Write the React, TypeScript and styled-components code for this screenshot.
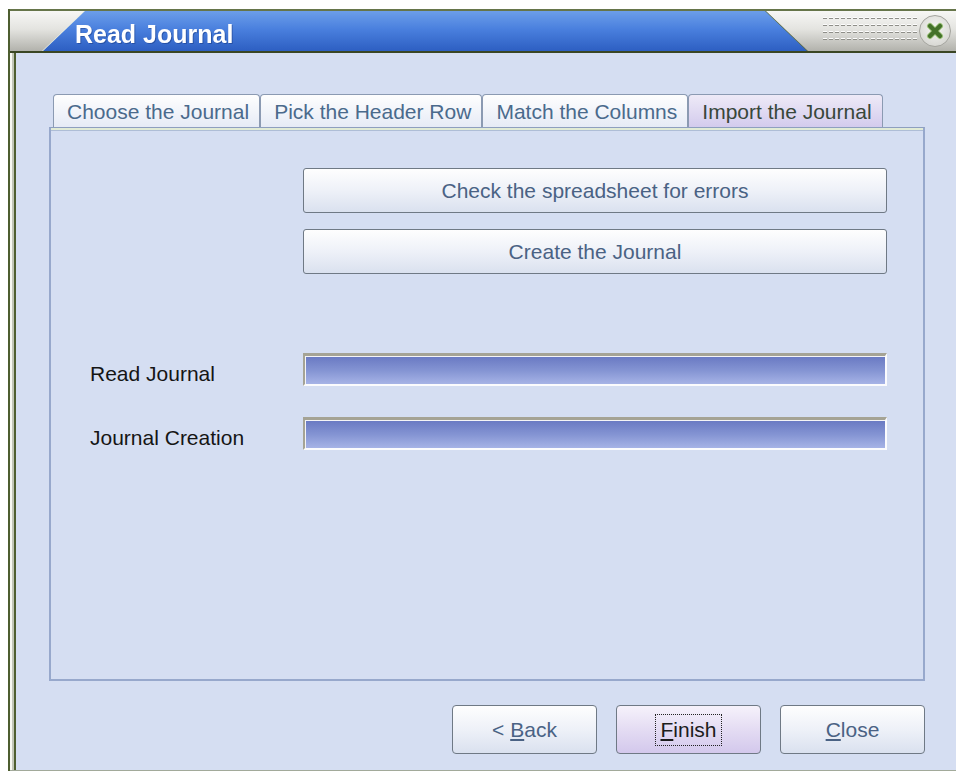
import React from 'react'
import styled, { createGlobalStyle } from 'styled-components'

const GlobalStyle = createGlobalStyle`
    html,
    body {
        margin: 0;
        background: #fff;
        overflow: hidden;
    }

    body {
        font-family: 'Liberation Sans', Arial, sans-serif;
    }
`

type TabProps = { $active?: boolean }
type PushButtonProps = { $default?: boolean }

const TABS = ['Choose the Journal', 'Pick the Header Row', 'Match the Columns', 'Import the Journal']

const CloseGlyph = () => (
    <svg width="20" height="20" viewBox="0 0 20 20">
        <path d="M5 5 L15 15 M15 5 L5 15" stroke="#9cc27a" strokeWidth="6" strokeLinecap="round" />
        <path d="M5 5 L15 15 M15 5 L5 15" stroke="#44722a" strokeWidth="4.2" strokeLinecap="round" />
    </svg>
)

export default function App() {
    return (
        <>
            <GlobalStyle />
            <Window>
                <TitleBar>
                    <BandEdge>
                        <TitleBand>
                            <Caption>Read Journal</Caption>
                        </TitleBand>
                    </BandEdge>
                    <Spacer />
                    <Grip />
                    <CloseBox>
                        <CloseGlyph />
                    </CloseBox>
                </TitleBar>

                <Body>
                    <TabStrip>
                        {TABS.map((t, i) => (
                            <Tab key={t} $active={i === TABS.length - 1}>
                                {t}
                            </Tab>
                        ))}
                    </TabStrip>

                    <Panel>
                        <Actions>
                            <ActionButton>Check the spreadsheet for errors</ActionButton>
                            <ActionButton>Create the Journal</ActionButton>
                        </Actions>

                        <ProgressGrid>
                            <Label>Read Journal</Label>
                            <Progress>
                                <Fill />
                            </Progress>
                            <Label>Journal Creation</Label>
                            <Progress>
                                <Fill />
                            </Progress>
                        </ProgressGrid>
                    </Panel>

                    <Footer>
                        <PushButton>
                            <span>
                                &lt; <u>B</u>ack
                            </span>
                        </PushButton>
                        <PushButton $default>
                            <Focus>
                                <u>F</u>inish
                            </Focus>
                        </PushButton>
                        <PushButton>
                            <span>
                                <u>C</u>lose
                            </span>
                        </PushButton>
                    </Footer>
                </Body>
            </Window>
        </>
    )
}

const Window = styled.div`
    margin: 9px 0 0 8px;
    width: 948px;
    box-sizing: border-box;
    border-left: 2px solid #4e5e30;
    display: flex;
    flex-direction: column;
`

const TitleBar = styled.div`
    height: 44px;
    box-sizing: border-box;
    display: flex;
    align-items: stretch;
    padding-left: 33px;
    border-top: 2px solid #66754a;
    border-bottom: 2px solid #3a4624;
    background: linear-gradient(#f7f7f5, #e4e4e0 45%, #b2b2ac);
`

/* light bevel on the left slant, dark one on the right slant */
const BandEdge = styled.div`
    display: flex;
    filter: drop-shadow(-1px 0 0 #eef2e4) drop-shadow(1px 0 0 #5a6a3c);
`

const TitleBand = styled.div`
    width: 764px;
    display: flex;
    align-items: center;
    padding: 6px 0 0 32px;
    box-sizing: border-box;
    clip-path: polygon(42px 0, 722px 0, 100% 100%, 0 100%);
    background: linear-gradient(#6c9eea, #4a80de 45%, #2d5fc2);
`

const Caption = styled.span`
    font-weight: bold;
    font-size: 25px;
    color: #fff;
    text-shadow: 1px 1px 0 rgba(20, 50, 120, 0.45);
`

const Spacer = styled.div`
    flex: 1;
`

const Grip = styled.div`
    width: 96px;
    height: 28px;
    align-self: center;
    background: repeating-linear-gradient(to bottom, #fdfdfd 0 1px, #8e8e88 1px 2px, transparent 2px 7px);
    -webkit-mask-image: repeating-linear-gradient(90deg, #000 0 4px, transparent 4px 6px);
    mask-image: repeating-linear-gradient(90deg, #000 0 4px, transparent 4px 6px);
`

const CloseBox = styled.div`
    width: 32px;
    height: 32px;
    box-sizing: border-box;
    align-self: center;
    margin: 0 5px 0 0;
    border-radius: 50%;
    border: 1px solid #a4a49e;
    background: radial-gradient(circle at 50% 40%, #f6f6f4, #cfcfca);
    display: flex;
    align-items: center;
    justify-content: center;
`

const Body = styled.div`
    height: 718px;
    box-sizing: border-box;
    padding: 41px 31px 0 39px;
    background: #d5def2;
    border-bottom: 1px solid #a2aa9a;
    box-shadow: inset 2px 0 0 #f7f8f2, inset 4px 0 0 #c2c6b8, inset 6px 0 0 #4e5e30;
    font-size: 21px;
`

const TabStrip = styled.div`
    display: flex;
    margin-left: 4px;
    height: 33px;
`

const Tab = styled.div<TabProps>`
    display: flex;
    align-items: center;
    padding: 1px 10px 0 13px;
    box-sizing: border-box;
    border: 1px solid #8b9ab2;
    border-bottom: none;
    border-radius: 4px 4px 0 0;
    white-space: nowrap;
    color: ${(p) => (p.$active ? '#38473a' : '#4a6a8c')};
    background: ${(p) =>
        p.$active ? 'linear-gradient(#eeeaf7, #d3cbed)' : 'linear-gradient(#fefefe, #e6ebf6)'};
`

const Panel = styled.div`
    height: 554px;
    box-sizing: border-box;
    padding: 40px 36px 0 39px;
    border: 2px solid #97a8cc;
    border-top: 1px solid #8e9fbf;
    box-shadow: inset 0 2px 0 #e1ebd6, inset 0 3px 0 #aebdd6;
`

const Actions = styled.div`
    display: flex;
    flex-direction: column;
    gap: 16px;
    margin-left: 213px;
`

const ActionButton = styled.div`
    height: 45px;
    box-sizing: border-box;
    display: flex;
    align-items: center;
    justify-content: center;
    border: 1px solid #6f7985;
    border-radius: 3px;
    background: linear-gradient(#fefefe, #eef1f8 50%, #dae1ef);
    color: #4a6284;
`

const ProgressGrid = styled.div`
    display: grid;
    grid-template-columns: 213px 1fr;
    grid-auto-rows: 33px;
    row-gap: 31px;
    align-items: center;
    margin-top: 79px;
`

const Label = styled.span`
    color: #151515;
    padding-top: 9px;
`

const Progress = styled.div`
    height: 33px;
    box-sizing: border-box;
    border: 2px solid;
    border-top-width: 3px;
    border-color: #a5a395 #fbfbfd #fbfbfd #a5a395;
    padding: 1px 0 0 1px;
    background: #f4f4f6;
`

const Fill = styled.div`
    height: 100%;
    background: linear-gradient(#6a7ac3, #8494d3 50%, #a6b3e6);
`

const Footer = styled.div`
    display: flex;
    justify-content: flex-end;
    gap: 19px;
    padding-top: 24px;
`

const PushButton = styled.div<PushButtonProps>`
    width: 145px;
    height: 49px;
    box-sizing: border-box;
    display: flex;
    align-items: center;
    justify-content: center;
    border: 1px solid #6f7985;
    border-radius: 4px;
    color: ${(p) => (p.$default ? '#1c1c1c' : '#4a6284')};
    background: ${(p) =>
        p.$default
            ? 'linear-gradient(#f6f2fb, #e4dcf3 50%, #d3c8ec)'
            : 'linear-gradient(#fefefe, #eef1f8 50%, #dae1ef)'};
`

const Focus = styled.span`
    outline: 1px dotted #222;
    outline-offset: 3px;
    padding: 0 1px;
`
